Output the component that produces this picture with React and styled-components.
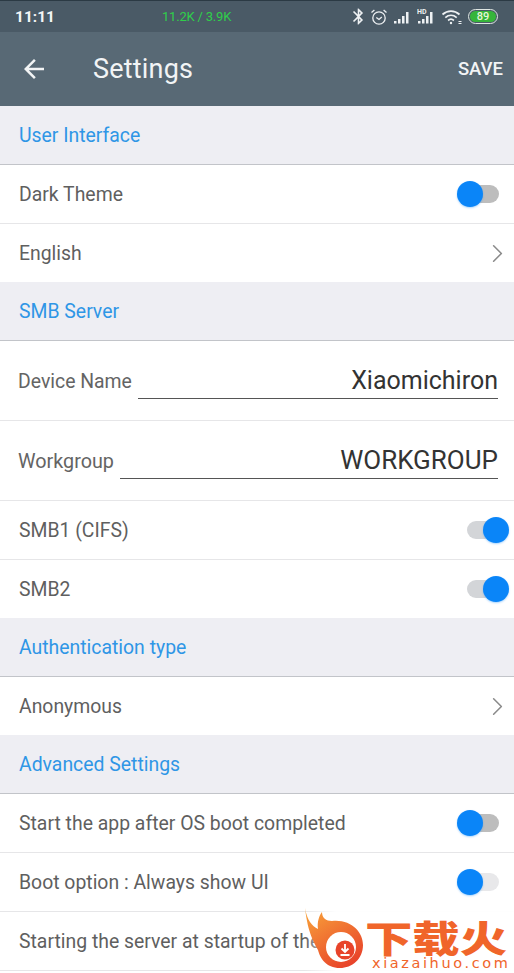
import React from "react";
import styled, { createGlobalStyle } from "styled-components";
import { MdArrowBack, MdBluetooth } from "react-icons/md";
import { ChevronRight } from "lucide-react";

const GlobalStyle = createGlobalStyle`
  html, body { margin: 0; padding: 0; background: #fff; }
  body { font-family: "Roboto", "Noto Sans", sans-serif; }
`;

const Page = styled.div`
  position: relative;
  width: 514px;
  height: 973px;
  overflow: hidden;
  background: #fff;
`;

const StatusBar = styled.div`
  height: 32px;
  box-sizing: border-box;
  border-top: 1px solid #2b3a44;
  background: #4a5a66;
  display: grid;
  grid-template-columns: 147px 1fr auto;
  align-items: center;
  padding: 0 16px 0 15px;
  color: #fff;
`;

const Clock = styled.span`
  font-size: 15.5px;
  font-weight: 700;
  color: #f4f6f7;
`;

const Speed = styled.span`
  font-size: 13px;
  color: #2fcf4a;
  letter-spacing: -0.2px;
`;

const StatusIcons = styled.div`
  display: flex;
  align-items: center;
  gap: 5px;
  color: #eef1f3;
`;

const BluetoothIcon = styled(MdBluetooth)`
  margin-right: -3px;
`;

const Battery = styled.span`
  width: 30px;
  height: 15px;
  box-sizing: border-box;
  border: 1px solid #dfe6e2;
  border-radius: 8px;
  background: #36b53a;
  background-clip: content-box;
  padding: 1px;
  color: #e6f5d8;
  font-size: 11px;
  font-weight: 500;
  line-height: 11px;
  text-align: center;
`;

const Header = styled.header`
  height: 74px;
  box-sizing: border-box;
  background: #586975;
  display: flex;
  align-items: center;
  padding: 0 11px 0 19px;
  color: #f2f4f5;
`;

const BackButton = styled.span`
  display: flex;
  width: 74px;
`;

const Title = styled.h1`
  flex: 1;
  margin: 0;
  font-size: 27px;
  font-weight: 400;
  letter-spacing: 0.2px;
`;

const SaveButton = styled.span`
  font-size: 18.5px;
  font-weight: 500;
`;

const SectionHead = styled.div`
  height: 58px;
  box-sizing: content-box;
  background: #eeeef3;
  border-bottom: 1px solid #c2c4c9;
  display: flex;
  align-items: center;
  padding-left: 19px;
  font-size: 19.4px;
  color: #2f96e6;
`;

const Row = styled.div`
  height: 58px;
  border-bottom: ${({ $last }) => ($last ? "0" : "1px solid #e6e6e8")};
  display: flex;
  align-items: center;
  justify-content: space-between;
  box-sizing: content-box;
  padding-left: 19px;
  background: #fff;
`;

const RowLabel = styled.span`
  font-size: 19.4px;
  color: #5f5f5f;
  white-space: nowrap;
`;

const Chevron = styled(ChevronRight)`
  margin-right: 1px;
  color: #8a8a8a;
`;

const FieldRow = styled.div`
  height: 79px;
  border-bottom: 1px solid #e6e6e8;
  box-sizing: content-box;
  display: flex;
  align-items: center;
  gap: 6px;
  padding: 0 16px 0 18px;
`;

const FieldLabel = styled.span`
  padding-top: 2px;
  font-size: ${({ $size }) => $size}px;
  color: #646464;
  white-space: nowrap;
`;

const FieldValue = styled.div`
  flex: 1;
  height: 39px;
  margin-top: -3px;
  border-bottom: 1.5px solid #555;
  font-size: ${({ $size }) => $size}px;
  line-height: 43px;
  color: #333;
  text-align: right;
`;

const Switch = styled.span`
  position: relative;
  display: block;
  width: 32px;
  height: 18px;
  margin-right: 15px;
  border-radius: 9px;
  background: ${({ $track }) => $track};
`;

const Knob = styled.span`
  position: absolute;
  top: -4px;
  ${({ $on }) => ($on ? "right: -10px;" : "left: -10px;")}
  width: 26px;
  height: 26px;
  border-radius: 50%;
  background: #0a85f8;
  box-shadow: 0 1px 2px rgba(10, 133, 248, 0.35);
`;

const Watermark = styled.div`
  position: absolute;
  left: 304px;
  top: 906px;
  width: 210px;
  height: 67px;
  display: flex;
  &::before {
    content: "";
    position: absolute;
    inset: 4px 0 0 0;
    background: linear-gradient(90deg, rgba(255,255,255,0) 0, rgba(255,255,255,0.96) 32px);
  }
`;

const Flame = styled.svg`
  position: relative;
  flex: none;
`;

const BrandText = styled.div`
  position: relative;
  margin-left: 1px;
  padding-top: 12px;
  display: flex;
  flex-direction: column;
  align-items: flex-start;
  color: #f0652a;
`;

const BrandName = styled.span`
  font-family: "Noto Sans CJK SC", sans-serif;
  font-size: 37px;
  font-weight: 900;
  line-height: 38px;
  white-space: nowrap;
  transform: scaleX(1.28);
  transform-origin: left center;
`;

const BrandUrl = styled.span`
  margin-left: 7px;
  font-family: "DejaVu Sans", sans-serif;
  font-size: 14.5px;
  line-height: 15px;
  letter-spacing: 2.6px;
  white-space: nowrap;
`;

const Toggle = ({ on, track }) => (
  <Switch $track={track}>
    <Knob $on={on} />
  </Switch>
);

const Alarm = () => (
  <svg width="18" height="18" viewBox="0 0 18 18" fill="none" stroke="currentColor" strokeWidth="1.3">
    <circle cx="9" cy="10" r="6.2" />
    <path d="M6.3 9.5 9 11.5l2.8-2.4M1.5 4.6 4.4 2M16.5 4.6 13.6 2" />
  </svg>
);

const Signal = ({ hd }) => (
  <svg width="19" height="20" viewBox="0 0 19 20" fill="currentColor">
    {hd && <text x="0" y="6.5" fontSize="7" fontWeight="700" fontFamily="Roboto">HD</text>}
    <rect x="1" y="14" width="2.5" height="2.5" />
    <rect x="5" y="12" width="2.5" height="4.5" />
    <rect x="9" y="9" width="2.5" height="7.5" />
    <rect x="13" y="5" width="2.5" height="11.5" />
  </svg>
);

const Wifi = () => (
  <svg width="22" height="18" viewBox="0 0 21 18" fill="none" stroke="currentColor" strokeWidth="1.7">
    <path d="M1 6.5c5-4.6 12-4.6 17 0M3.8 9.6c3.4-3 8-3 11.4 0M6.6 12.5c1.8-1.6 4-1.6 5.8 0" />
    <circle cx="9.5" cy="15" r="1.2" fill="currentColor" stroke="none" />
    <path d="M17 15.5h3M17 13.5h3" strokeWidth="1" />
  </svg>
);

const FlameLogo = () => (
  <Flame width="60" height="67" viewBox="0 0 60 67">
    <defs>
      <linearGradient id="fire" x1="0.1" y1="0" x2="0.7" y2="1">
        <stop offset="0" stopColor="#f8a23a" />
        <stop offset="1" stopColor="#e8432a" />
      </linearGradient>
    </defs>
    <path
      d="M1 2C3 14 8 20 14 23 13 16 15 10 18 6 18 12 22 15 28 15 47 13 59 26 59 39 59 53 48 62 36 62 22 62 16 52 14 44 10 36 4 28 1 2Z"
      fill="url(#fire)"
    />
    <circle cx="37" cy="41" r="15" fill="#fff" />
    <circle cx="41" cy="44" r="9.5" fill="#e8432a" />
    <path d="M41 38v7M37.5 42.5l3.5 3.5 3.5-3.5M36.5 49h9" stroke="#fff" strokeWidth="1.8" fill="none" />
  </Flame>
);

const App = () => (
  <Page>
    <GlobalStyle />
    <StatusBar>
      <Clock>11:11</Clock>
      <Speed>11.2K / 3.9K</Speed>
      <StatusIcons>
        <BluetoothIcon size={19} />
        <Alarm />
        <Signal />
        <Signal hd />
        <Wifi />
        <Battery>89</Battery>
      </StatusIcons>
    </StatusBar>
    <Header>
      <BackButton>
        <MdArrowBack size={30} />
      </BackButton>
      <Title>Settings</Title>
      <SaveButton>SAVE</SaveButton>
    </Header>

    <SectionHead>User Interface</SectionHead>
    <Row>
      <RowLabel>Dark Theme</RowLabel>
      <Toggle track="#bdbdbd" />
    </Row>
    <Row $last>
      <RowLabel>English</RowLabel>
      <Chevron size={31} strokeWidth={1.2} />
    </Row>

    <SectionHead>SMB Server</SectionHead>
    <FieldRow>
      <FieldLabel $size={19.4}>Device Name</FieldLabel>
      <FieldValue $size={25}>Xiaomichiron</FieldValue>
    </FieldRow>
    <FieldRow>
      <FieldLabel $size={19.8}>Workgroup</FieldLabel>
      <FieldValue $size={26}>WORKGROUP</FieldValue>
    </FieldRow>
    <Row>
      <RowLabel>SMB1 (CIFS)</RowLabel>
      <Toggle on track="#d3d5d8" />
    </Row>
    <Row $last>
      <RowLabel>SMB2</RowLabel>
      <Toggle on track="#d3d5d8" />
    </Row>

    <SectionHead>Authentication type</SectionHead>
    <Row $last>
      <RowLabel>Anonymous</RowLabel>
      <Chevron size={31} strokeWidth={1.2} />
    </Row>

    <SectionHead>Advanced Settings</SectionHead>
    <Row>
      <RowLabel>Start the app after OS boot completed</RowLabel>
      <Toggle track="#bdbdbd" />
    </Row>
    <Row>
      <RowLabel>Boot option : Always show UI</RowLabel>
      <Toggle track="#e8e8ea" />
    </Row>
    <Row>
      <RowLabel>Starting the server at startup of the app</RowLabel>
    </Row>

    <Watermark>
      <FlameLogo />
      <BrandText>
        <BrandName>下载火</BrandName>
        <BrandUrl>xiazaihuo.com</BrandUrl>
      </BrandText>
    </Watermark>
  </Page>
);

export default App;
